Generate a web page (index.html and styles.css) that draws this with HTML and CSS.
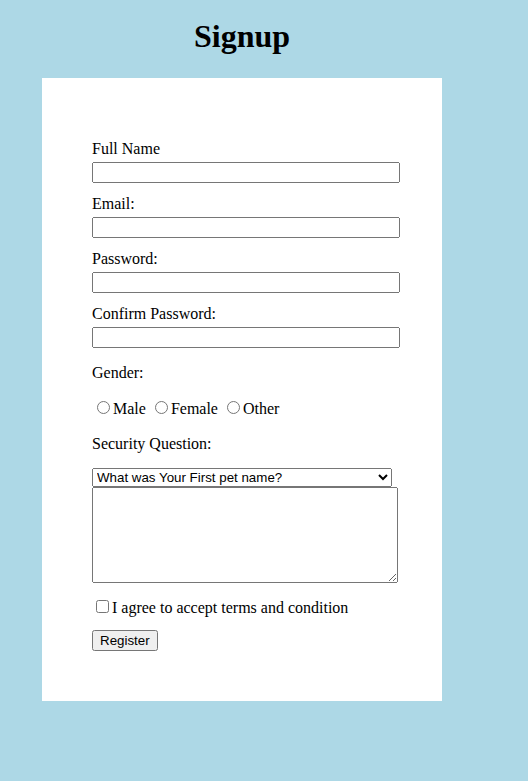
FILE: index.html
```html
<!DOCTYPE html>
<html lang="en">
<head>
<meta charset="utf-8">
<title>Signup</title>
<link rel="stylesheet" href="styles.css">
</head>
<body>
<div class="page">
  <div class="wrap">
    <h1 class="title">Signup</h1>
    <form class="card">
      <div class="field">
        <label class="lbl" for="fn">Full Name</label>
        <input class="txt" id="fn" type="text">
      </div>
      <div class="field">
        <label class="lbl" for="em">Email:</label>
        <input class="txt" id="em" type="email">
      </div>
      <div class="field">
        <label class="lbl" for="pw">Password:</label>
        <input class="txt" id="pw" type="password">
      </div>
      <div class="field field-last">
        <label class="lbl" for="cpw">Confirm Password:</label>
        <input class="txt" id="cpw" type="password">
      </div>
      <div class="line gender">Gender:</div>
      <div class="line radios"><input type="radio" name="g" id="m"><label for="m">Male</label> <input type="radio" name="g" id="f"><label for="f">Female</label> <input type="radio" name="g" id="o"><label for="o">Other</label></div>
      <div class="line sec">Security Question:</div>
      <select class="sel">
        <option>What was Your First pet name?</option>
        <option>What was your school name?</option>
      </select>
      <textarea class="ta"></textarea>
      <div class="line agree"><input type="checkbox" id="t"><label for="t">I agree to accept terms and condition</label></div>
      <button class="btn" type="button">Register</button>
    </form>
  </div>
</div>
</body>
</html>
```

FILE: styles.css
```css
html, body {
  margin: 0;
  padding: 0;
}
body {
  background: #add8e6;
  font-family: "Liberation Serif", "Times New Roman", serif;
  font-size: 16px;
  color: #000;
  min-height: 781px;
}
.page {
  padding: 18px 0 80px 42px;
}
.wrap {
  width: 400px;
}
.title {
  margin: 0 0 23px;
  font-size: 32px;
  line-height: 37px;
  font-weight: bold;
  text-align: center;
}
.card {
  background: #fff;
  padding: 62px 50px 50px;
}
.field {
  margin-bottom: 12px;
}
.field-last {
  margin-bottom: 16px;
}
.lbl {
  display: block;
  line-height: 18px;
  height: 18px;
  margin-bottom: 4px;
}
.txt {
  display: block;
  width: 100%;
  margin: 0;
  font-family: "Liberation Sans", Arial, sans-serif;
  font-size: 13.333px;
}
.line {
  line-height: 18px;
}
.gender {
  height: 18px;
  margin-bottom: 16px;
}
.radios {
  height: 21px;
  margin-bottom: 16px;
}
.sec {
  height: 18px;
  margin-bottom: 15px;
}
.sel {
  display: block;
  width: 100%;
  height: 19px;
  margin: 0;
  font-family: "Liberation Sans", Arial, sans-serif;
  font-size: 13.333px;
}
.ta {
  display: block;
  width: 100%;
  height: 90px;
  margin: 0 0 14px;
  font-family: "Liberation Mono", monospace;
  font-size: 13.333px;
}
.agree {
  height: 18px;
  margin-bottom: 15px;
}
.btn {
  display: block;
  margin: 0;
  height: 21px;
  font-family: "Liberation Sans", Arial, sans-serif;
  font-size: 13.333px;
}
```
